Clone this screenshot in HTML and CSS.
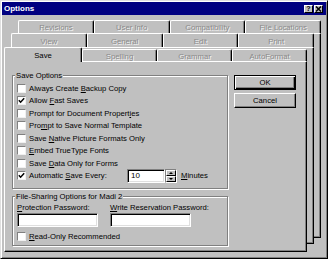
FILE: index.html
```html
<!DOCTYPE html>
<html>
<head>
<meta charset="utf-8">
<link rel="stylesheet" href="styles.css">
</head>
<body>
<div class="window">
  <div class="titlebar">
    <span class="title">Options</span>
    <div class="tbtns">
      <span class="tbtn help">?</span>
      <span class="tbtn close"><svg width="7" height="6" viewBox="0 0 7 6"><path d="M1 0.5 L6 5.5 M6 0.5 L1 5.5" stroke="#000" stroke-width="1.5"/></svg></span>
    </div>
  </div>
  <div class="stack">
    <div class="sheet s3">
      <div class="tabrow r3"><div class="tab">Revisions</div><div class="tab">User Info</div><div class="tab">Compatibility</div><div class="tab">File Locations</div></div>
      <div class="page"></div>
    </div>
    <div class="sheet s2">
      <div class="tabrow r2"><div class="tab">View</div><div class="tab">General</div><div class="tab">Edit</div><div class="tab">Print</div></div>
      <div class="page"></div>
    </div>
    <div class="sheet s1">
      <div class="tabrow r1"><div class="tab active">Save</div><div class="tab">Spelling</div><div class="tab">Grammar</div><div class="tab">AutoFormat</div></div>
      <div class="page front">
        <div class="left">
          <div class="group g1">
            <div class="gtitle">Save Options</div>
            <div class="check"><span class="box"></span><span>Always Create <u>B</u>ackup Copy</span></div>
            <div class="check"><span class="box"><svg width="7" height="7" viewBox="0 0 7 7"><path d="M0.8 3.3 L2.6 5.2 L6.2 1.3" fill="none" stroke="#000" stroke-width="1.5"/></svg></span><span>Allow <u>F</u>ast Saves</span></div>
            <div class="check"><span class="box"></span><span>Prompt for Document Propert<u>i</u>es</span></div>
            <div class="check"><span class="box"></span><span>Pro<u>m</u>pt to Save Normal Template</span></div>
            <div class="check"><span class="box"></span><span>Save <u>N</u>ative Picture Formats Only</span></div>
            <div class="check"><span class="box"></span><span><u>E</u>mbed TrueType Fonts</span></div>
            <div class="check"><span class="box"></span><span>Save <u>D</u>ata Only for Forms</span></div>
            <div class="check autosave"><span class="box"><svg width="7" height="7" viewBox="0 0 7 7"><path d="M0.8 3.3 L2.6 5.2 L6.2 1.3" fill="none" stroke="#000" stroke-width="1.5"/></svg></span><span class="alabel">Automatic <u>S</u>ave Every:</span><span class="spin"><span class="field num">10</span><span class="arrows"><span class="arr"><span class="tri up"></span></span><span class="arr"><span class="tri dn"></span></span></span></span><span class="unit"><u>M</u>inutes</span></div>
          </div>
          <div class="group g2">
            <div class="gtitle">File-Sharing Options for Madi 2</div>
            <div class="pwrow">
              <div class="pw"><div class="pwl"><u>P</u>rotection Password:</div><div class="field pwf"></div></div>
              <div class="pw"><div class="pwl"><u>W</u>rite Reservation Password:</div><div class="field pwf"></div></div>
            </div>
            <div class="check ro"><span class="box"></span><span><u>R</u>ead-Only Recommended</span></div>
          </div>
        </div>
        <div class="right">
          <div class="btn default">OK</div>
          <div class="btn">Cancel</div>
        </div>
      </div>
    </div>
  </div>
</div>
</body>
</html>
```
FILE: styles.css
```css
* { box-sizing: border-box; }
html, body { margin: 0; padding: 0; }
body {
  width: 328px;
  height: 259px;
  overflow: hidden;
  background: #c0c0c0;
  font-family: "Liberation Sans", Arial, sans-serif;
  font-size: 7.7px;
  color: #000;
}
u { text-decoration: underline; text-underline-offset: 1px; }

.window {
  width: 328px;
  height: 259px;
  padding: 1px;
  border: 1px solid;
  border-color: #dfdfdf #000 #000 #dfdfdf;
  box-shadow: inset 1px 1px #fff, inset -1px -1px #808080;
  background: #c0c0c0;
}

.titlebar {
  height: 13px;
  background: #000080;
  display: flex;
  align-items: center;
  justify-content: space-between;
  padding: 0 3px 0 2px;
}
.title {
  color: #fff;
  font-weight: bold;
  font-size: 8px;
}
.tbtns { display: flex; gap: 1px; }
.tbtn {
  width: 9px;
  height: 8px;
  background: #c0c0c0;
  border: 1px solid;
  border-color: #fff #000 #000 #fff;
  display: flex;
  align-items: center;
  justify-content: center;
  font-weight: bold;
  font-size: 7px;
  line-height: 6px;
}

.stack { display: grid; margin-top: 5px; }
.sheet {
  grid-area: 1 / 1;
  width: 303px;
  display: flex;
  flex-direction: column;
}
.s3 { margin-left: 16px; height: 218px; }
.s2 { margin-left: 9px; margin-top: 13px; height: 211px; }
.s1 { margin-left: 2px; margin-top: 27px; height: 205px; }

.tabrow { display: flex; align-items: flex-end; }
.r3 { height: 13px; }
.r2, .r1 { height: 14px; }

.tab {
  flex: 1;
  height: 100%;
  background: #c0c0c0;
  border-top: 1px solid #fff;
  border-left: 1px solid #fff;
  border-right: 1px solid #000;
  box-shadow: inset -1px 0 #808080;
  border-radius: 2px 2px 0 0;
  display: flex;
  align-items: center;
  justify-content: center;
  padding-top: 1px;
  color: #8a8a8a;
  text-shadow: 1px 1px #f4f4f4;
}
.r1 .tab { height: 12px; }
.r1 .tab.active {
  flex: none;
  width: 78px;
  height: 15px;
  margin-bottom: -1px;
  z-index: 1;
  color: #000;
  text-shadow: none;
}

.page {
  flex: 1;
  background: #c0c0c0;
  border: 1px solid;
  border-color: #fff #000 #000 #fff;
  box-shadow: inset -1px -1px #808080;
}

.page.front {
  display: flex;
  gap: 6px;
  padding: 13px 0 0 7px;
}

.left { width: 216px; display: flex; flex-direction: column; }

.group {
  border: 1px solid #808080;
  box-shadow: inset 1px 1px #fff, 1px 1px #fff;
  display: flex;
  flex-direction: column;
  align-items: flex-start;
  padding-left: 4px;
}
.g1 { height: 114px; }
.g2 { height: 50px; margin-top: 7px; }

.gtitle {
  margin: -5px 0 0 -2px;
  padding: 0 1px;
  background: #c0c0c0;
  line-height: 9px;
  height: 9px;
  white-space: nowrap;
}
.g1 .gtitle { margin-bottom: 2px; }

.check {
  height: 12.5px;
  display: flex;
  align-items: center;
  white-space: nowrap;
}
.box {
  width: 9px;
  height: 9px;
  flex: none;
  margin-right: 3px;
  background: #fff;
  border: 1px solid;
  border-color: #808080 #f0f0f0 #f0f0f0 #808080;
  display: flex;
  align-items: center;
  justify-content: center;
}
.alabel { width: 98px; }

.spin { display: flex; height: 14px; }
.field {
  background: #fff;
  border: 1px solid;
  border-color: #808080 #fff #fff #808080;
  box-shadow: inset 1px 1px #000, inset -1px -1px #dfdfdf;
}
.num {
  width: 38px;
  height: 14px;
  padding: 0 0 0 3px;
  line-height: 12px;
  font-size: 8px;
}
.arrows {
  width: 12px;
  height: 14px;
  display: flex;
  flex-direction: column;
  border: 1px solid;
  border-color: #808080 #fff #fff #808080;
}
.arr {
  flex: 1;
  background: #c0c0c0;
  border: 1px solid;
  border-color: #fff #000 #000 #fff;
  display: flex;
  align-items: center;
  justify-content: center;
}
.tri { width: 0; height: 0; border-left: 2.5px solid transparent; border-right: 2.5px solid transparent; }
.tri.up { border-bottom: 2.5px solid #000; }
.tri.dn { border-top: 2.5px solid #000; }
.unit { margin-left: 4px; }

.pwrow { display: flex; gap: 12px; margin-top: 2px; }
.pwl { line-height: 10px; height: 10px; white-space: nowrap; }
.pwf { width: 81px; height: 14px; }
.ro { margin-top: 3px; }

.right { width: 62px; display: flex; flex-direction: column; gap: 3px; }
.btn {
  height: 15px;
  display: flex;
  align-items: center;
  justify-content: center;
  border: 1px solid;
  border-color: #fff #000 #000 #fff;
  box-shadow: inset -1px -1px #808080;
}
.btn.default {
  border-color: #000;
  box-shadow: inset 1px 1px #fff, inset -1px -1px #000, inset -2px -2px #808080;
}
```
